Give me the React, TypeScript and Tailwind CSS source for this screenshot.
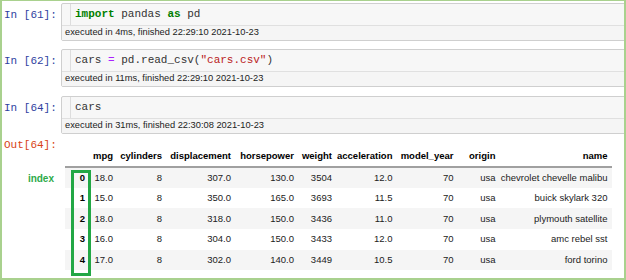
import React from 'react';

const mono = "font-['Liberation_Mono',monospace]";
const sans = "font-['Liberation_Sans',Arial,sans-serif]";

type Cell = { n: number; code: React.ReactNode; info: string; gap: string };

const cells: Cell[] = [
    {
        n: 61,
        gap: '',
        code: (
            <>
                <span className="font-bold text-[#008000]">import</span> pandas{' '}
                <span className="font-bold text-[#008000]">as</span> pd
            </>
        ),
        info: 'executed in 4ms, finished 22:29:10 2021-10-23',
    },
    {
        n: 62,
        gap: 'mt-[8px]',
        code: (
            <>
                cars <span className="text-[#aa22ff]">=</span> pd.read_csv(
                <span className="text-[#ba2121]">"cars.csv"</span>)
            </>
        ),
        info: 'executed in 11ms, finished 22:29:10 2021-10-23',
    },
    {
        n: 64,
        gap: 'mt-[9px]',
        code: <>cars</>,
        info: 'executed in 31ms, finished 22:30:08 2021-10-23',
    },
];

const columns = ['mpg', 'cylinders', 'displacement', 'horsepower', 'weight', 'acceleration', 'model_year', 'origin', 'name'];
const widths = ['w-[25px]', 'w-[28px]', 'w-[49px]', 'w-[69px]', 'w-[63px]', 'w-[38px]', 'w-[60px]', 'w-[61px]', 'w-[42px]', 'w-[112px]'];

const rows = [
    ['18.0', '8', '307.0', '130.0', '3504', '12.0', '70', 'usa', 'chevrolet chevelle malibu'],
    ['15.0', '8', '350.0', '165.0', '3693', '11.5', '70', 'usa', 'buick skylark 320'],
    ['18.0', '8', '318.0', '150.0', '3436', '11.0', '70', 'usa', 'plymouth satellite'],
    ['16.0', '8', '304.0', '150.0', '3433', '12.0', '70', 'usa', 'amc rebel sst'],
    ['17.0', '8', '302.0', '140.0', '3449', '10.5', '70', 'usa', 'ford torino'],
];

export default function App() {
    return (
        <div className="w-[626px] h-[280px] bg-white border-x-2 border-b-2 border-t border-[#a9d18e] overflow-hidden pt-[2px]">
            {cells.map((c) => (
                <div key={c.n} className={`flex ${c.gap}`}>
                    <div className={`w-[59px] shrink-0 pl-[2px] h-[23px] pt-[1px] flex items-center text-[11px] text-[#303f9f] ${mono}`}>
                        In&nbsp;[{c.n}]:
                    </div>
                    <div className="flex-1 -mr-[4px] border border-[#cfcfcf] rounded-[2px] bg-[#f7f7f7]">
                        <div className="h-[22px] flex border-b border-[#e0e0e0]">
                            <div className="w-[9px] border-r border-[#dddddd]" />
                            <div className={`pl-[4px] flex items-center text-[11px] text-[#333333] whitespace-pre ${mono}`}>{c.code}</div>
                        </div>
                        <div className={`h-[14px] bg-[#f5f5f5] pl-[3px] flex items-center text-[9.3px] text-[#222222] ${sans}`}>{c.info}</div>
                    </div>
                </div>
            ))}

            {/* OUTPUT */}
            <div className="flex mt-[5px]">
                <div className="w-[59px] shrink-0 pl-[2px] flex flex-col">
                    <div className={`text-[11px] leading-[13px] text-[#d84315] ${mono}`}>Out[64]:</div>
                    <div className={`mt-[21px] pr-[7px] text-right text-[10px] leading-[12px] font-bold text-[#2eaa4a] ${sans}`}>index</div>
                </div>
                <div className="relative ml-[4px] mt-[8px]">
                    <table className={`table-fixed border-collapse text-[9.5px] text-[#222222] ${sans}`}>
                        <colgroup>
                            {widths.map((w, i) => (
                                <col key={i} className={w} />
                            ))}
                        </colgroup>
                        <thead>
                            <tr className="h-[20px] border-b-2 border-[#a0a0a0]">
                                <th className="p-0" />
                                {columns.map((col) => (
                                    <th key={col} className="p-0 pr-[5px] text-right font-bold text-black whitespace-nowrap">
                                        {col}
                                    </th>
                                ))}
                            </tr>
                        </thead>
                        <tbody>
                            {rows.map((r, i) => (
                                <tr key={i} className={`h-[20.7px] ${i % 2 === 0 ? 'bg-[#f5f5f5]' : 'bg-white'}`}>
                                    <th className="p-0 pr-[5px] text-right font-bold text-black">{i}</th>
                                    {r.map((v, j) => (
                                        <td key={j} className="p-0 pr-[5px] text-right whitespace-nowrap">
                                            {v}
                                        </td>
                                    ))}
                                </tr>
                            ))}
                        </tbody>
                    </table>
                    {/* highlight round the index column */}
                    <div className="absolute left-[6px] top-[23px] w-[20px] h-[106px] border-[3px] border-[#22a745]" />
                </div>
            </div>
        </div>
    );
}
